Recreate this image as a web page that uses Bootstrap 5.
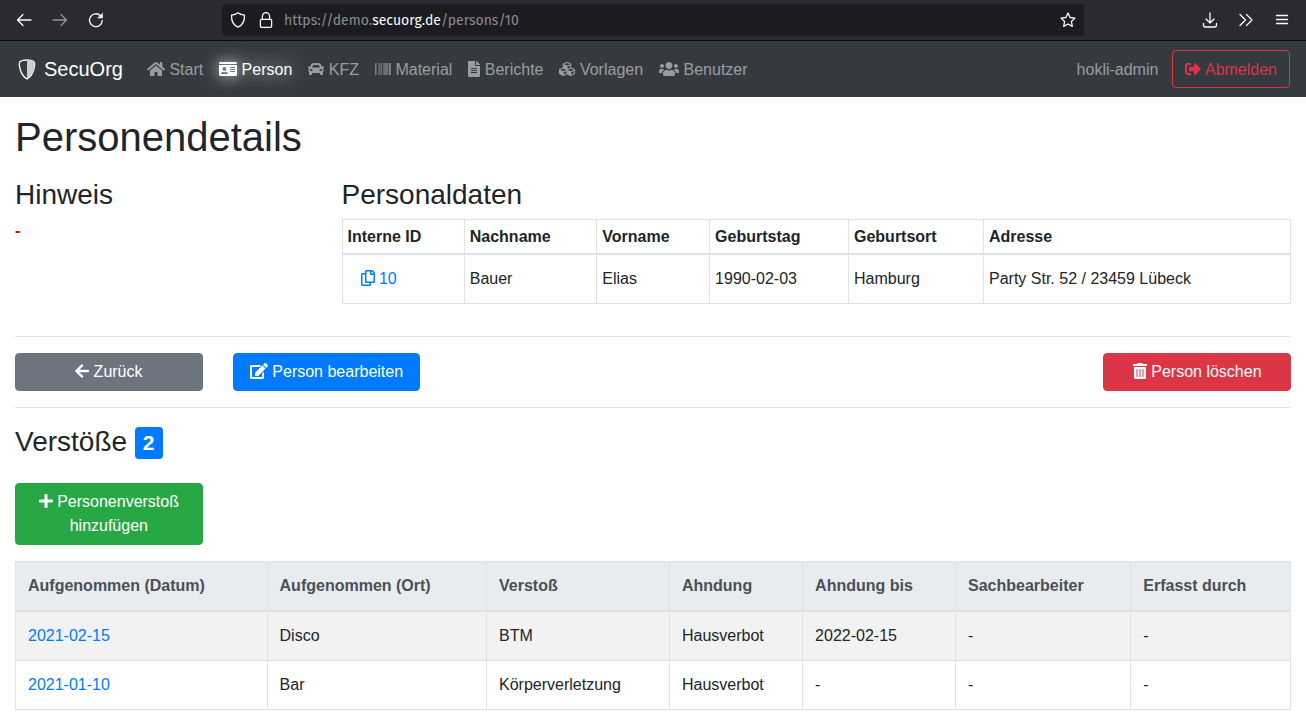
<!DOCTYPE html>
<html lang="de">
<head>
<meta charset="utf-8">
<meta name="viewport" content="width=device-width, initial-scale=1">
<title>SecuOrg – Personendetails</title>
<link href="https://cdn.jsdelivr.net/npm/bootstrap@5.3.0/dist/css/bootstrap.min.css" rel="stylesheet">
<style>
  body {
    font-family: "Liberation Sans", Arial, sans-serif;
    color: #212529;
    --bs-link-color: #007bff;
    --bs-link-color-rgb: 0, 123, 255;
  }
  a { text-decoration: none; }
  h1 { font-size: 40px; line-height: 48px; }
  h2 { font-size: 28px; line-height: 34px; padding-top: 1px; margin-bottom: 7px; }
  hr { margin: 16px 0; border-top: 1px solid #000; opacity: .1; }
  .row, .container-fluid { --bs-gutter-x: 30px; }
  .rule-after-data { margin-top: 32px; }

  /* Browser toolbar */
  .toolbar { background: #2b2a33; height: 41px; border-bottom: 1px solid #0c0c0d; color: #fbfbfe; padding: 0 16px; }
  .toolbar button { display: flex; padding: 0; border: 0; background: none; color: inherit; }
  .toolbar svg { width: 16px; height: 16px; fill: none; stroke: currentColor; stroke-width: 1.3; stroke-linecap: round; stroke-linejoin: round; }
  .tool-side { flex: 1 1 0; gap: 20px; }
  .address { flex: 0 1 862px; height: 32px; background: #1c1b22; border-radius: 4px; padding: 0 8px; gap: 12px; }
  .address-text { font: 14px "Fira Sans", "Noto Sans", sans-serif; color: #8c8b91; margin-left: -2px; }
  .address-text b { font-weight: 400; color: #fbfbfe; }

  /* Application bar */
  .appbar { background: #343a40; padding: 8px 16px; min-height: 56px; --bs-navbar-nav-link-padding-x: 8px; }
  .appbar .navbar-brand { font-size: 20px; line-height: 30px; padding: 5px 0; margin-right: 16px; gap: 6px; }
  .appbar .nav-link { color: rgba(255,255,255,.5); line-height: 24px; padding-top: 9px; padding-bottom: 7px; }
  .appbar .nav-link.active { color: #fff; text-shadow: 0 0 20px #fff; }
  .appbar .nav-link.active .fa { filter: drop-shadow(0 0 8px #fff); }
  .appbar .btn { padding: 7px 12px 5px; }
  .account { gap: 6px; }
  .fa { height: 16px; width: auto; fill: currentColor; vertical-align: -2px; }

  .btn { --bs-btn-border-radius: 4px; line-height: 24px; }
  .btn-primary { --bs-btn-bg: #007bff; --bs-btn-border-color: #007bff; }
  .btn-success { --bs-btn-bg: #28a745; --bs-btn-border-color: #28a745; }
  .btn-link { --bs-btn-color: #007bff; text-decoration: none; }
  .note { color: #e60000; }
  .count { font-size: 21px; padding: 5px 8px; background: #007bff; border-radius: 4px; line-height: 22px; vertical-align: 1px; }

  .grid-table { margin: 0; color: #212529; }
  .grid-table > * > tr > * { border: 1px solid #dee2e6; padding: 12px; vertical-align: middle; }
  .grid-table > thead > tr > th { border-bottom-width: 2px; }
  .grid-table.tight > * > tr > * { padding: 5px; }
  .grid-table.tight > thead > tr > * { padding-bottom: 4px; }
  .grid-table .head-light th { background: #e9ecef; color: #495057; }
  .grid-table .odd td { background: #f2f2f2; }
</style>
</head>
<body>

<header class="toolbar d-flex align-items-center">
  <div class="tool-side d-flex">
    <button aria-label="Zurück"><svg viewBox="0 0 16 16"><path d="M1.5 8h13.5M7 2.500 1.500 8 7 13.500"/></svg></button>
    <button aria-label="Vor" class="opacity-50"><svg viewBox="0 0 16 16"><path d="M14.500 8H1M9 2.500 14.500 8 9 13.500"/></svg></button>
    <button aria-label="Neu laden"><svg viewBox="0 0 16 16"><path d="M14.300 8.500A6.400 6.400 0 1 1 12.500 3.700"/><path d="M14.500 1.500v4.500h-4.500z" fill="currentColor" stroke-width=".6"/></svg></button>
  </div>
  <div class="address d-flex align-items-center">
    <svg viewBox="0 0 16 16"><path d="M8 .8C6.300 2 4 2.900 1.500 3.200 1.300 8.500 3 13 8 15.200 13 13 14.700 8.500 14.500 3.200 12 2.900 9.700 2 8 .8z"/></svg>
    <svg viewBox="0 0 16 16"><rect x="2.400" y="7.300" width="11.200" height="8" rx="1.300"/><path d="M4.400 7.300V4.200a3.600 3.600 0 0 1 7.200 0v3.100"/></svg>
    <span class="address-text flex-grow-1">https://demo.<b>secuorg.de</b>/persons/10</span>
    <button aria-label="Lesezeichen"><svg viewBox="0 0 16 16"><path d="M8 1l2.100 4.500 4.900.6-3.600 3.400.9 4.900L8 12l-4.300 2.400.9-4.900L1 6.100l4.900-.6z"/></svg></button>
  </div>
  <div class="tool-side d-flex justify-content-end">
    <button aria-label="Downloads"><svg viewBox="0 0 16 16"><path d="M8 .8v10M4 7l4 4 4-4M1.500 11.500v1.500a2 2 0 0 0 2 2h9a2 2 0 0 0 2-2v-1.500"/></svg></button>
    <button aria-label="Mehr"><svg viewBox="0 0 16 16"><path d="M2 2.500 7.500 8 2 13.500M8.500 2.500 14 8l-5.500 5.500"/></svg></button>
    <button aria-label="Menü"><svg viewBox="0 0 16 16"><path d="M2.500 3.500h11M2.500 7.500h11M2.500 11.500h11"/></svg></button>
  </div>
</header>

<nav class="navbar navbar-expand appbar" data-bs-theme="dark">
  <a class="navbar-brand d-flex align-items-center text-white" href="#">
    <svg width="22" height="22" viewBox="0 0 22 22" aria-hidden="true"><path d="M11 2C8 2 5.500 2.600 4.200 3.600 3 4.600 3.200 8 4.200 11.500 5.500 16 8.500 19.500 11 20.800 13.500 19.500 16.500 16 17.800 11.500 18.800 8 19 4.600 17.800 3.600 16.500 2.600 14 2 11 2z" fill="none" stroke="#fff" stroke-width="1.300"/><path d="M11 2v18.800C13.500 19.500 16.500 16 17.800 11.500 18.800 8 19 4.600 17.800 3.600 16.500 2.600 14 2 11 2z" fill="#ccc"/></svg>
    <span>SecuOrg</span>
  </a>
  <ul class="navbar-nav me-auto">
    <li class="nav-item"><a class="nav-link" href="#"><svg class="fa" viewBox="0 0 576 512"><path d="M280.370 148.260L96 300.110V464a16 16 0 0 0 16 16l112.060-.29a16 16 0 0 0 15.920-16V368a16 16 0 0 1 16-16h64a16 16 0 0 1 16 16v95.640a16 16 0 0 0 16 16.050L464 480a16 16 0 0 0 16-16V300L295.670 148.260a12.190 12.190 0 0 0-15.300 0zM571.600 251.470L488 182.560V44.050a12 12 0 0 0-12-12h-56a12 12 0 0 0-12 12v72.610L318.470 43a48 48 0 0 0-61 0L4.340 251.470a12 12 0 0 0-1.600 16.900l25.500 31A12 12 0 0 0 45.150 301l235.220-193.740a12.190 12.190 0 0 1 15.300 0L530.900 301a12 12 0 0 0 16.900-1.600l25.500-31a12 12 0 0 0-1.700-16.930z"/></svg> Start</a></li>
    <li class="nav-item"><a class="nav-link active" aria-current="page" href="#"><svg class="fa" viewBox="0 0 576 512"><path d="M528 32H48C21.500 32 0 53.500 0 80v16h576V80c0-26.500-21.500-48-48-48zM0 432c0 26.500 21.500 48 48 48h480c26.500 0 48-21.500 48-48V128H0v304zm352-232c0-4.400 3.600-8 8-8h144c4.400 0 8 3.600 8 8v16c0 4.400-3.600 8-8 8H360c-4.400 0-8-3.600-8-8v-16zm0 64c0-4.400 3.600-8 8-8h144c4.400 0 8 3.600 8 8v16c0 4.400-3.600 8-8 8H360c-4.400 0-8-3.600-8-8v-16zm0 64c0-4.400 3.600-8 8-8h144c4.400 0 8 3.600 8 8v16c0 4.400-3.600 8-8 8H360c-4.400 0-8-3.600-8-8v-16zM176 192c35.300 0 64 28.700 64 64s-28.700 64-64 64-64-28.700-64-64 28.700-64 64-64zM67.100 396.200C75.500 370.500 99.600 352 128 352h8.200c12.300 5.100 25.700 8 39.800 8s27.600-2.900 39.800-8h8.200c28.400 0 52.500 18.500 60.900 44.200 3.200 9.900-5.200 19.800-15.600 19.800H82.700c-10.400 0-18.800-10-15.600-19.800z"/></svg> Person</a></li>
    <li class="nav-item"><a class="nav-link" href="#"><svg class="fa" viewBox="0 0 512 512"><path d="M499.990 176h-59.870l-16.640-41.600C406.380 91.630 365.570 64 319.500 64h-127c-46.060 0-86.880 27.630-103.990 70.400L71.870 176H12.010C4.200 176-1.530 183.340.37 190.910l6 24C7.700 220.250 12.500 224 18.010 224h20.070C24.650 235.730 16 252.780 16 272v48c0 16.120 6.160 30.670 16 41.930V416c0 17.670 14.330 32 32 32h32c17.670 0 32-14.330 32-32v-32h256v32c0 17.670 14.330 32 32 32h32c17.670 0 32-14.330 32-32v-54.070c9.840-11.250 16-25.800 16-41.930v-48c0-19.220-8.650-36.270-22.070-48H494c5.510 0 10.310-3.750 11.640-9.090l6-24c1.890-7.570-3.840-14.910-11.650-14.910zm-352.060-17.830c7.290-18.220 24.940-30.170 44.570-30.170h127c19.630 0 37.280 11.950 44.570 30.170L384 208H128l19.930-49.830zM96 319.800c-19.200 0-32-12.760-32-31.900S76.800 256 96 256s48 28.710 48 47.850-28.800 15.950-48 15.950zm320 0c-19.200 0-48 3.190-48-15.950S396.800 256 416 256s32 12.760 32 31.900-12.800 31.900-32 31.900z"/></svg> KFZ</a></li>
    <li class="nav-item"><a class="nav-link" href="#"><svg class="fa" viewBox="0 0 512 512"><path d="M0 448V64h18v384H0zm26.857-.273V64H36v383.727h-9.143zm27.143 0V64h8.857v383.727H54zm44.857 0V64h8.857v383.727h-8.857zm36 0V64h17.714v383.727h-17.714zm44.857 0V64h8.857v383.727h-8.857zm18 0V64h8.857v383.727h-8.857zm18 0V64h8.857v383.727h-8.857zm35.715 0V64h18v383.727h-18zm44.857 0V64h18v383.727h-18zm35.999 0V64h18.001v383.727h-18.001zm36.001 0V64h18.001v383.727h-18.001zm26.857 0V64h18v383.727h-18zm45.143 0V64h26.857v383.727h-26.857zm35.714 0V64h9.143v383.727H476zm18 .273V64h18v384h-18z"/></svg> Material</a></li>
    <li class="nav-item"><a class="nav-link" href="#"><svg class="fa" viewBox="0 0 384 512"><path d="M224 136V0H24C10.700 0 0 10.700 0 24v464c0 13.300 10.700 24 24 24h336c13.300 0 24-10.700 24-24V160H248c-13.200 0-24-10.800-24-24zm64 236c0 6.600-5.400 12-12 12H108c-6.600 0-12-5.400-12-12v-8c0-6.600 5.400-12 12-12h168c6.600 0 12 5.400 12 12v8zm0-64c0 6.600-5.400 12-12 12H108c-6.600 0-12-5.400-12-12v-8c0-6.600 5.400-12 12-12h168c6.600 0 12 5.400 12 12v8zm0-72v8c0 6.600-5.400 12-12 12H108c-6.600 0-12-5.400-12-12v-8c0-6.600 5.400-12 12-12h168c6.600 0 12 5.400 12 12zm96-114.100v6.100H256V0h6.100c6.400 0 12.500 2.500 17 7l97.900 98c4.500 4.500 7 10.600 7 16.900z"/></svg> Berichte</a></li>
    <li class="nav-item"><a class="nav-link" href="#"><svg class="fa" viewBox="0 0 512 512"><path d="M488.600 250.200L392 214V105.500c0-15-9.300-28.400-23.400-33.700l-100-37.500c-8.100-3.100-17.100-3.100-25.300 0l-100 37.500c-14.100 5.300-23.400 18.700-23.400 33.700V214l-96.600 36.200C9.300 255.500 0 268.900 0 283.900V394c0 13.600 7.700 26.100 19.900 32.200l100 50c10.100 5.100 22.100 5.100 32.200 0l103.900-52 103.900 52c10.100 5.100 22.100 5.100 32.200 0l100-50c12.200-6.100 19.900-18.600 19.900-32.200V283.900c0-15-9.300-28.400-23.400-33.700zM358 214.800l-85 31.900v-68.200l85-37v73.300zM154 104.100l102-38.200 102 38.200v.6l-102 41.400-102-41.400v-.6zm84 291.100l-85 42.500v-79.100l85-38.800v75.400zm0-112l-102 41.400-102-41.400v-.6l102-38.200 102 38.200v.6zm240 112l-85 42.500v-79.100l85-38.800v75.400zm0-112l-102 41.400-102-41.400v-.6l102-38.200 102 38.200v.6z"/></svg> Vorlagen</a></li>
    <li class="nav-item"><a class="nav-link" href="#"><svg class="fa" viewBox="0 0 640 512"><path d="M96 224c35.300 0 64-28.700 64-64s-28.700-64-64-64-64 28.700-64 64 28.700 64 64 64zm448 0c35.300 0 64-28.700 64-64s-28.700-64-64-64-64 28.700-64 64 28.700 64 64 64zm32 32h-64c-17.600 0-33.500 7.100-45.100 18.600 40.300 22.100 68.900 62 75.100 109.400h66c17.700 0 32-14.300 32-32v-32c0-35.300-28.700-64-64-64zm-256 0c61.900 0 112-50.100 112-112S381.900 32 320 32 208 82.100 208 144s50.100 112 112 112zm76.800 32h-8.300c-20.800 10-43.900 16-68.500 16s-47.600-6-68.500-16h-8.300C179.600 288 128 339.600 128 403.200V432c0 26.500 21.500 48 48 48h288c26.500 0 48-21.500 48-48v-28.800c0-63.600-51.600-115.200-115.200-115.200zm-223.700-13.400C161.500 263.100 145.600 256 128 256H64c-35.300 0-64 28.700-64 64v32c0 17.700 14.300 32 32 32h65.900c6.300-47.400 34.900-87.300 75.200-109.400z"/></svg> Benutzer</a></li>
  </ul>
  <div class="navbar-nav align-items-center account">
    <a class="nav-link" href="#">hokli-admin</a>
    <button class="btn btn-outline-danger" type="button"><svg class="fa" viewBox="0 0 512 512"><path d="M497 273L329 441c-15 15-41 4.500-41-17v-96H152c-13.300 0-24-10.700-24-24v-96c0-13.300 10.700-24 24-24h136V88c0-21.400 25.900-32 41-17l168 168c9.300 9.400 9.300 24.600 0 34zM192 436v-40c0-6.600-5.400-12-12-12H96c-17.700 0-32-14.300-32-32V160c0-17.700 14.300-32 32-32h84c6.600 0 12-5.400 12-12V76c0-6.600-5.400-12-12-12H96c-53 0-96 43-96 96v192c0 53 43 96 96 96h84c6.600 0 12-5.400 12-12z"/></svg> Abmelden</button>
  </div>
</nav>

<main class="container-fluid pt-3">
  <h1 class="mb-3">Personendetails</h1>

  <div class="row">
    <section class="col-3">
      <h2>Hinweis</h2>
      <strong class="note">-</strong>
    </section>
    <section class="col-9">
      <h2>Personaldaten</h2>
      <table class="table grid-table tight">
        <thead><tr><th>Interne ID</th><th>Nachname</th><th>Vorname</th><th>Geburtstag</th><th>Geburtsort</th><th>Adresse</th></tr></thead>
        <tbody><tr>
          <td><a class="btn btn-link" href="#"><svg class="fa" viewBox="0 0 448 512"><path d="M433.941 65.941l-51.882-51.882A48 48 0 0 0 348.118 0H176c-26.510 0-48 21.490-48 48v48H48c-26.510 0-48 21.490-48 48v320c0 26.510 21.490 48 48 48h224c26.510 0 48-21.490 48-48v-48h80c26.510 0 48-21.490 48-48V99.882a48 48 0 0 0-14.059-33.941zM266 464H54a6 6 0 0 1-6-6V150a6 6 0 0 1 6-6h74v224c0 26.510 21.490 48 48 48h96v42a6 6 0 0 1-6 6zm128-96H182a6 6 0 0 1-6-6V54a6 6 0 0 1 6-6h106v88c0 13.255 10.745 24 24 24h88v202a6 6 0 0 1-6 6zm6-256h-64V48h9.632c1.591 0 3.117.632 4.243 1.757l48.368 48.368a6 6 0 0 1 1.757 4.243V112z"/></svg> 10</a></td>
          <td>Bauer</td><td>Elias</td><td>1990-02-03</td><td>Hamburg</td><td>Party Str. 52 / 23459 Lübeck</td>
        </tr></tbody>
      </table>
    </section>
  </div>

  <hr class="rule-after-data">

  <div class="row justify-content-between">
    <div class="col-2"><button class="btn btn-secondary w-100" type="button"><svg class="fa" viewBox="0 0 448 512"><path d="M257.500 445.100l-22.200 22.200c-9.400 9.400-24.600 9.400-33.900 0L7 273c-9.400-9.400-9.400-24.600 0-33.900L201.400 44.700c9.400-9.400 24.600-9.400 33.900 0l22.200 22.200c9.500 9.500 9.300 25-.4 34.300L136.600 216H424c13.300 0 24 10.700 24 24v32c0 13.300-10.700 24-24 24H136.600l120.500 114.800c9.800 9.300 10 24.800.4 34.300z"/></svg> Zurück</button></div>
    <div class="col-2 me-auto"><button class="btn btn-primary w-100" type="button"><svg class="fa" viewBox="0 0 576 512"><path d="M402.600 83.200l90.200 90.200c3.800 3.800 3.800 10 0 13.800L274.400 405.600l-92.800 10.300c-12.400 1.400-22.900-9.100-21.500-21.500l10.300-92.800L388.800 83.200c3.800-3.800 10-3.800 13.800 0zm162-22.900l-48.800-48.800c-15.200-15.200-39.900-15.200-55.200 0l-35.400 35.400c-3.800 3.800-3.800 10 0 13.800l90.200 90.200c3.800 3.800 10 3.800 13.800 0l35.400-35.400c15.200-15.300 15.200-40 0-55.200zM384 346.200V448H64V128h229.800c3.200 0 6.200-1.300 8.500-3.500l40-40c7.600-7.600 2.200-20.500-8.500-20.500H48C21.500 64 0 85.500 0 112v352c0 26.500 21.500 48 48 48h352c26.500 0 48-21.500 48-48V306.200c0-10.700-12.900-16-20.500-8.500l-40 40c-2.200 2.300-3.500 5.300-3.500 8.500z"/></svg> Person bearbeiten</button></div>
    <div class="col-2"><button class="btn btn-danger w-100" type="button"><svg class="fa" viewBox="0 0 448 512"><path d="M32 464a48 48 0 0 0 48 48h288a48 48 0 0 0 48-48V128H32zm272-256a16 16 0 0 1 32 0v224a16 16 0 0 1-32 0zm-96 0a16 16 0 0 1 32 0v224a16 16 0 0 1-32 0zm-96 0a16 16 0 0 1 32 0v224a16 16 0 0 1-32 0zM432 32H312l-9.400-18.700A24 24 0 0 0 281.100 0H166.800a23.720 23.720 0 0 0-21.400 13.300L136 32H16A16 16 0 0 0 0 48v32a16 16 0 0 0 16 16h416a16 16 0 0 0 16-16V48a16 16 0 0 0-16-16z"/></svg> Person löschen</button></div>
  </div>

  <hr>

  <h2 class="mb-4">Verstöße <span class="badge count">2</span></h2>
  <div class="row mb-3">
    <div class="col-2"><button class="btn btn-success w-100" type="button"><svg class="fa" viewBox="0 0 448 512"><path d="M416 208H272V64c0-17.670-14.330-32-32-32h-32c-17.670 0-32 14.330-32 32v144H32c-17.670 0-32 14.330-32 32v32c0 17.670 14.330 32 32 32h144v144c0 17.670 14.330 32 32 32h32c17.670 0 32-14.330 32-32V304h144c17.670 0 32-14.330 32-32v-32c0-17.670-14.330-32-32-32z"/></svg> Personenverstoß hinzufügen</button></div>
  </div>

  <table class="table grid-table">
    <thead class="head-light"><tr><th>Aufgenommen (Datum)</th><th>Aufgenommen (Ort)</th><th>Verstoß</th><th>Ahndung</th><th>Ahndung bis</th><th>Sachbearbeiter</th><th>Erfasst durch</th></tr></thead>
    <tbody>
      <tr class="odd"><td><a href="#">2021-02-15</a></td><td>Disco</td><td>BTM</td><td>Hausverbot</td><td>2022-02-15</td><td>-</td><td>-</td></tr>
      <tr><td><a href="#">2021-01-10</a></td><td>Bar</td><td>Körperverletzung</td><td>Hausverbot</td><td>-</td><td>-</td><td>-</td></tr>
    </tbody>
  </table>
</main>

<script src="https://cdn.jsdelivr.net/npm/bootstrap@5.3.0/dist/js/bootstrap.bundle.min.js"></script>
</body>
</html>
